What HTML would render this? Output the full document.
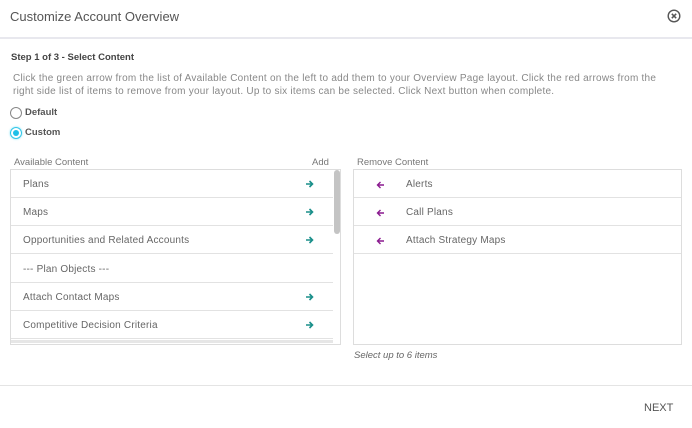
<!DOCTYPE html>
<html><head><style>
*{margin:0;padding:0;box-sizing:border-box}
body{width:692px;height:428px;background:#fff;font-family:"Liberation Sans",sans-serif;color:#555;position:relative;overflow:hidden;font-size:10px}
.abs{position:absolute}
.row{position:absolute;left:0;height:28px;border-bottom:1px solid #e2e2e2;line-height:30px;font-size:10px;color:#666;letter-spacing:0.2px}
.ga{position:absolute;right:19px;top:10px}
.pa{position:absolute;left:22px;top:11px}
</style></head><body>
<div class="abs" style="left:10px;top:9px;font-size:13px;color:#555">Customize Account Overview</div>
<svg class="abs" style="left:667px;top:9px" width="14" height="14" viewBox="0 0 14 14"><circle cx="7" cy="7" r="5.8" fill="none" stroke="#555" stroke-width="1.4"/><path d="M4.8 4.8L9.2 9.2M9.2 4.8L4.8 9.2" stroke="#555" stroke-width="1.5"/></svg>
<div class="abs" style="left:0;top:37px;width:692px;height:2px;background:#e8e8ee"></div>
<div class="abs" style="left:11px;top:52px;font-weight:bold;font-size:9.5px;color:#444">Step 1 of 3 - Select Content</div>
<div class="abs" style="left:13px;top:72px;width:655px;font-size:10px;letter-spacing:0.24px;line-height:13px;color:#888">Click the green arrow from the list of Available Content on the left to add them to your Overview Page layout. Click the red arrows from the right side list of items to remove from your layout. Up to six items can be selected. Click Next button when complete.</div>
<div class="abs" style="left:10px;top:107px;width:12px;height:12px;border:1px solid #888;border-radius:50%"></div>
<div class="abs" style="left:25px;top:107px;font-weight:bold;font-size:9.5px;color:#555">Default</div>
<div class="abs" style="left:10px;top:127px;width:12px;height:12px;border:1px solid #2ec5e8;border-radius:50%;box-shadow:0 0 2px #7de0f5"><div style="margin:2px;width:6px;height:6px;border-radius:50%;background:#1ec0e8"></div></div>
<div class="abs" style="left:25px;top:127px;font-weight:bold;font-size:9.5px;color:#555">Custom</div>
<div class="abs" style="left:14px;top:157px;font-size:9.5px;color:#777">Available Content</div>
<div class="abs" style="left:312px;top:157px;font-size:9.5px;color:#777">Add</div>
<div class="abs" style="left:357px;top:157px;font-size:9.5px;color:#777">Remove Content</div>
<div class="abs" style="left:10px;top:169px;width:331px;height:176px;border:1px solid #ddd;overflow:hidden">
 <div class="row" style="top:0;width:322px;padding-left:12px">Plans<svg class="ga" width="9" height="8" viewBox="0 0 9 8"><path d="M1 4H7.5M4.5 1L7.5 4L4.5 7" fill="none" stroke="#1a8f8a" stroke-width="1.6"/></svg></div>
 <div class="row" style="top:28px;width:322px;padding-left:12px">Maps<svg class="ga" width="9" height="8" viewBox="0 0 9 8"><path d="M1 4H7.5M4.5 1L7.5 4L4.5 7" fill="none" stroke="#1a8f8a" stroke-width="1.6"/></svg></div>
 <div class="row" style="top:56px;width:322px;padding-left:12px">Opportunities and Related Accounts<svg class="ga" width="9" height="8" viewBox="0 0 9 8"><path d="M1 4H7.5M4.5 1L7.5 4L4.5 7" fill="none" stroke="#1a8f8a" stroke-width="1.6"/></svg></div>
 <div class="row" style="top:85px;width:322px;padding-left:12px">--- Plan Objects ---</div>
 <div class="row" style="top:113px;width:322px;padding-left:12px">Attach Contact Maps<svg class="ga" width="9" height="8" viewBox="0 0 9 8"><path d="M1 4H7.5M4.5 1L7.5 4L4.5 7" fill="none" stroke="#1a8f8a" stroke-width="1.6"/></svg></div>
 <div class="row" style="top:141px;width:322px;padding-left:12px">Competitive Decision Criteria<svg class="ga" width="9" height="8" viewBox="0 0 9 8"><path d="M1 4H7.5M4.5 1L7.5 4L4.5 7" fill="none" stroke="#1a8f8a" stroke-width="1.6"/></svg></div>
 <div class="abs" style="left:0;top:170px;width:322px;height:3px;background:#e6e6e6"></div>
 <div class="abs" style="left:323px;top:0;width:6px;height:64px;background:#c4c4c4;border-radius:3px"></div>
</div>
<div class="abs" style="left:353px;top:169px;width:329px;height:176px;border:1px solid #ddd">
 <div class="row" style="top:0;width:327px;padding-left:52px">Alerts<svg class="pa" width="9" height="8" viewBox="0 0 9 8"><path d="M8 4H1.5M4.5 1L1.5 4L4.5 7" fill="none" stroke="#8a1a8f" stroke-width="1.4"/></svg></div>
 <div class="row" style="top:28px;width:327px;padding-left:52px">Call Plans<svg class="pa" width="9" height="8" viewBox="0 0 9 8"><path d="M8 4H1.5M4.5 1L1.5 4L4.5 7" fill="none" stroke="#8a1a8f" stroke-width="1.4"/></svg></div>
 <div class="row" style="top:56px;width:327px;padding-left:52px">Attach Strategy Maps<svg class="pa" width="9" height="8" viewBox="0 0 9 8"><path d="M8 4H1.5M4.5 1L1.5 4L4.5 7" fill="none" stroke="#8a1a8f" stroke-width="1.4"/></svg></div>
 <div class="row" style="top:84px;width:327px;border-bottom:0"></div>
</div>
<div class="abs" style="left:354px;top:350px;font-size:9.5px;font-style:italic;color:#666">Select up to 6 items</div>
<div class="abs" style="left:0;top:385px;width:692px;height:1px;background:#e4e4e4"></div>
<div class="abs" style="left:644px;top:402px;font-size:11px;color:#555">NEXT</div>
</body></html>
